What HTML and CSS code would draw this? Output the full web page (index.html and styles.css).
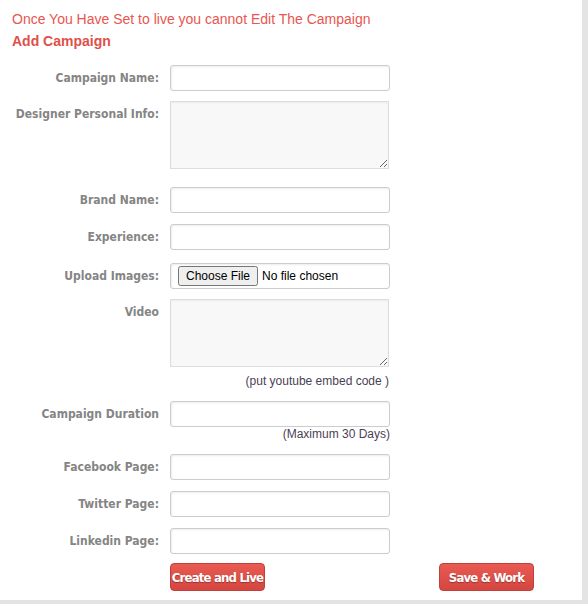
FILE: index.html
```html
<!DOCTYPE html>
<html>
<head>
<meta charset="utf-8">
<link rel="stylesheet" href="styles.css">
</head>
<body>
<div class="panel">
  <p class="notice">Once You Have Set to live you cannot Edit The Campaign</p>
  <h2 class="title">Add Campaign</h2>
  <form class="form">
    <div class="row row-first">
      <label class="lbl">Campaign Name:</label>
      <div class="field"><input class="inp" type="text"></div>
    </div>
    <div class="row row-ta">
      <label class="lbl">Designer Personal Info:</label>
      <div class="field"><textarea class="ta"></textarea></div>
    </div>
    <div class="row">
      <label class="lbl">Brand Name:</label>
      <div class="field"><input class="inp" type="text"></div>
    </div>
    <div class="row row-exp">
      <label class="lbl">Experience:</label>
      <div class="field"><input class="inp" type="text"></div>
    </div>
    <div class="row row-upload">
      <label class="lbl">Upload Images:</label>
      <div class="field"><input class="inp file" type="file"></div>
    </div>
    <div class="row row-video">
      <label class="lbl">Video</label>
      <div class="field">
        <textarea class="ta"></textarea>
        <div class="hint hint-video">(put youtube embed code )</div>
      </div>
    </div>
    <div class="row row-dur">
      <label class="lbl">Campaign Duration</label>
      <div class="field">
        <input class="inp" type="text">
        <div class="hint">(Maximum 30 Days)</div>
      </div>
    </div>
    <div class="row">
      <label class="lbl">Facebook Page:</label>
      <div class="field"><input class="inp" type="text"></div>
    </div>
    <div class="row">
      <label class="lbl">Twitter Page:</label>
      <div class="field"><input class="inp" type="text"></div>
    </div>
    <div class="row row-last">
      <label class="lbl">Linkedin Page:</label>
      <div class="field"><input class="inp" type="text"></div>
    </div>
    <div class="row">
      <span class="lbl"></span>
      <div class="actions">
        <button type="button" class="btn">Create and Live</button>
        <button type="button" class="btn">Save &amp; Work</button>
      </div>
    </div>
  </form>
</div>
</body>
</html>
```

FILE: styles.css
```css
html, body {
  margin: 0;
  padding: 0;
}
body {
  background: #e4e4e4;
  width: 588px;
  height: 604px;
  overflow: hidden;
  font-family: "Liberation Sans", Arial, sans-serif;
}
.panel {
  width: 582px;
  height: 600px;
  background: #fff;
  box-sizing: border-box;
  padding: 10px 0 0 12px;
}
.notice {
  margin: 0;
  font-size: 14px;
  line-height: 18px;
  color: #e8564f;
}
.title {
  margin: 4px 0 0;
  font-size: 14px;
  line-height: 18px;
  font-weight: bold;
  color: #e0504a;
}
.form {
  margin-top: 15px;
}
.row {
  display: grid;
  grid-template-columns: 147px 220px;
  column-gap: 11px;
  margin-bottom: 11px;
}
.row-first { margin-bottom: 10px; }
.row-ta { margin-bottom: 18px; }
.row-exp { margin-bottom: 13px; }
.row-upload { margin-bottom: 10px; }
.row-video { margin-bottom: 13px; }
.row-dur { margin-bottom: 13px; }
.row-last { margin-bottom: 9px; }
.lbl {
  text-align: right;
  font-family: "DejaVu Sans Condensed", "DejaVu Sans", sans-serif;
  font-weight: bold;
  font-size: 12px;
  line-height: 26px;
  color: #858585;
}
.field {
  display: flex;
  flex-direction: column;
  align-items: flex-end;
}
.inp {
  display: block;
  box-sizing: border-box;
  width: 220px;
  height: 26px;
  margin: 0;
  border: 1px solid #cccccc;
  border-radius: 3px;
  box-shadow: inset 1px 1px 2px rgba(0,0,0,0.08);
  background: #fff;
  font-family: "Liberation Sans", Arial, sans-serif;
  font-size: 13px;
}
.file {
  padding: 2px 0 0 7px;
  font-size: 12px;
  color: #000;
}
.ta {
  display: block;
  box-sizing: border-box;
  width: 219px;
  height: 68px;
  margin: 0;
  border: 1px solid #dddddd;
  border-radius: 0;
  background: #f8f8f8;
  box-shadow: inset 0 1px 2px rgba(0,0,0,0.05);
  align-self: flex-start;
}
.hint {
  font-family: "Liberation Sans", Arial, sans-serif;
  font-size: 12px;
  line-height: 14px;
  color: #4b3f55;
}
.hint-video {
  margin-top: 7px;
  margin-right: 1px;
}
.actions {
  display: flex;
  justify-content: space-between;
  width: 364px;
}
.btn {
  box-sizing: border-box;
  width: 95px;
  height: 28px;
  padding: 0;
  border: 1px solid #c0413b;
  border-radius: 4px;
  background: linear-gradient(#e95a53, #d4463f);
  color: #fff;
  font-family: "DejaVu Sans Condensed", "DejaVu Sans", sans-serif;
  font-weight: bold;
  font-size: 13px;
  letter-spacing: -0.8px;
  text-shadow: 0 1px 1px rgba(0,0,0,0.3);
  white-space: nowrap;
  overflow: visible;
}
```
